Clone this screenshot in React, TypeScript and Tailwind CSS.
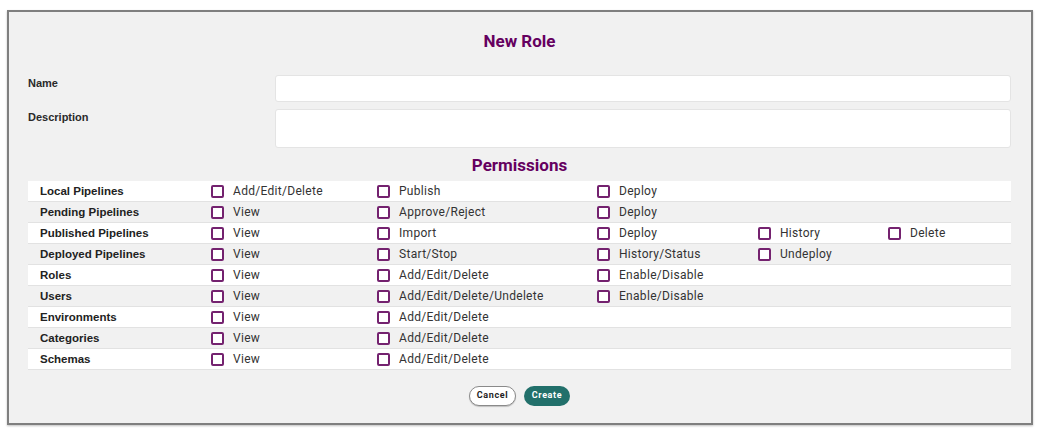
import { useState } from 'react';

type Perm = { label: string; items: string[] };

const permissions: Perm[] = [
  { label: 'Local Pipelines', items: ['Add/Edit/Delete', 'Publish', 'Deploy'] },
  { label: 'Pending Pipelines', items: ['View', 'Approve/Reject', 'Deploy'] },
  { label: 'Published Pipelines', items: ['View', 'Import', 'Deploy', 'History', 'Delete'] },
  { label: 'Deployed Pipelines', items: ['View', 'Start/Stop', 'History/Status', 'Undeploy'] },
  { label: 'Roles', items: ['View', 'Add/Edit/Delete', 'Enable/Disable'] },
  { label: 'Users', items: ['View', 'Add/Edit/Delete/Undelete', 'Enable/Disable'] },
  { label: 'Environments', items: ['View', 'Add/Edit/Delete'] },
  { label: 'Categories', items: ['View', 'Add/Edit/Delete'] },
  { label: 'Schemas', items: ['View', 'Add/Edit/Delete'] },
];

function Check({ text }: { text: string }) {
  const [checked, setChecked] = useState(false);
  return (
    <label className="flex items-center gap-[9px] cursor-pointer">
      <span
        onClick={() => setChecked((prev) => !prev)}
        className={`block w-[13px] h-[13px] rounded-[2px] border-2 border-[#74226f] ${
          checked ? 'bg-[#74226f]' : 'bg-white'
        }`}
      />
      <span className="text-[12px] tracking-[0.3px] text-[#333]">{text}</span>
    </label>
  );
}

export default function App() {
  return (
    <div className="w-[1042px] h-[436px] bg-white pt-[10px] pl-[7px] font-['Roboto',sans-serif]">
      <div className="w-[1026px] h-[415px] border-2 border-[#7f7f7f] bg-[#f1f1f1] shadow-[0_1px_2px_rgba(0,0,0,0.25)] pt-[19px] pl-[19px] pr-[20px]">
        <h2 className="text-center text-[17px] leading-[20px] font-bold text-[#65005f]">New Role</h2>

        <div className="mt-[24px] grid grid-cols-[247px_1fr] gap-y-[7px] font-['Liberation_Sans',sans-serif] text-[11px] font-bold text-[#2a2a2a]">
          <div className="leading-[16px]">Name</div>
          <input className="h-[27px] rounded-[3px] border border-[#e4e4e4] bg-white outline-none px-2" />
          <div className="leading-[16px]">Description</div>
          <textarea className="h-[39px] rounded-[3px] border border-[#e4e4e4] bg-white outline-none px-2 resize-none" />
        </div>

        <h3 className="mt-[7px] text-center text-[17px] leading-[20px] font-bold text-[#65005f]">Permissions</h3>

        <div className="mt-[6px]">
          {permissions.map((p, i) => (
            <div
              key={p.label}
              className={`grid grid-cols-[183px_166px_220px_161px_130px_1fr] items-center h-[21px] border-b border-[#e2e2e2] ${
                i % 2 === 0 ? 'bg-white' : 'bg-[#f1f1f1]'
              }`}
            >
              <div className="pl-3 pt-[1px] font-['Liberation_Sans',sans-serif] text-[11.5px] font-bold text-[#222]">
                {p.label}
              </div>
              {p.items.map((item) => (
                <Check key={item} text={item} />
              ))}
            </div>
          ))}
        </div>

        <div className="mt-[16px] flex justify-center gap-[8px]">
          <button
            type="button"
            className="w-[47px] h-[20px] rounded-full border border-[#8a8a8a] bg-white shadow-[0_1px_1px_rgba(0,0,0,0.2)] text-[9px] font-bold tracking-[0.6px] text-[#222]"
          >
            Cancel
          </button>
          <button
            type="button"
            className="w-[46px] h-[20px] rounded-full bg-[#22706b] text-[9px] font-bold tracking-[0.6px] text-white"
          >
            Create
          </button>
        </div>
      </div>
    </div>
  );
}
